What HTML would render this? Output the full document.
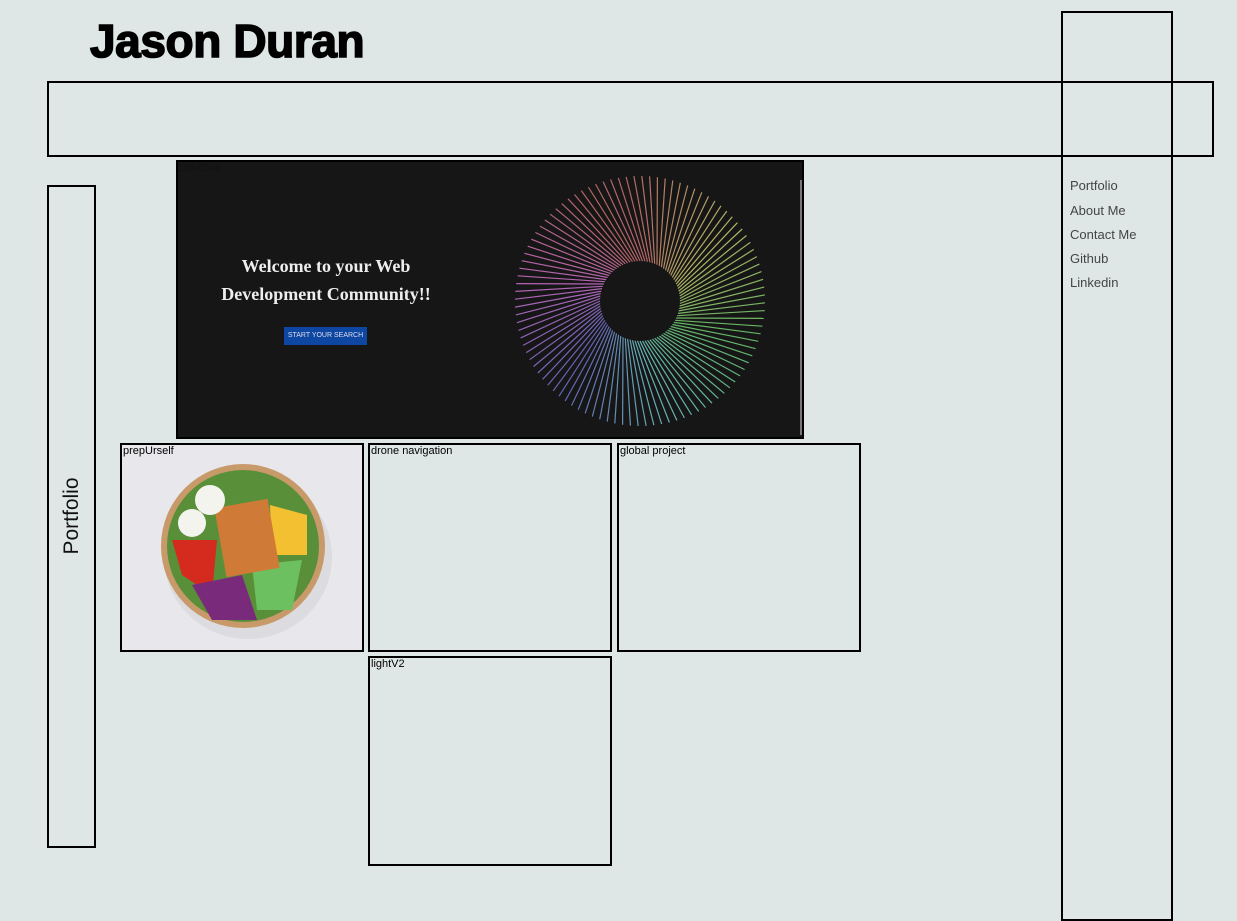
<!DOCTYPE html>
<html><head><meta charset="utf-8"><style>
body{margin:0;width:1237px;height:908px;background:#dfe7e6;position:relative;overflow:hidden;font-family:"Liberation Sans",sans-serif}
.a{position:absolute;box-sizing:border-box}
.b{border:2px solid #000}
h1{position:absolute;left:90px;top:14px;margin:0;font-size:46px;font-weight:bold;letter-spacing:-0.4px;color:#000;-webkit-text-stroke:1.6px #000}
.lbl{font-size:11px;color:#000;position:absolute;left:1px;top:0;line-height:13px}
.nav{position:absolute;left:1070px;font-size:13px;color:#444;}
</style></head><body>
<h1>Jason Duran</h1>
<div class="a b" style="left:47px;top:81px;width:1167px;height:76px"></div>
<div class="a b" style="left:1061px;top:11px;width:112px;height:910px"></div>
<div class="nav" style="top:178px">Portfolio</div>
<div class="nav" style="top:203px">About Me</div>
<div class="nav" style="top:227px">Contact Me</div>
<div class="nav" style="top:251px">Github</div>
<div class="nav" style="top:275px">Linkedin</div>
<div class="a b" style="left:47px;top:185px;width:49px;height:663px"></div>
<div class="a" style="left:72px;top:516px;transform:translate(-50%,-50%) rotate(-90deg);font-size:21px;color:#111;white-space:nowrap">Portfolio</div>

<div class="a b" style="left:176px;top:160px;width:628px;height:279px;background:#161616;overflow:hidden">
<div class="lbl" style="color:#111">DevDive</div>
<div class="a" style="top:18px;width:2px;height:255px;background:#777;left:622px"></div>
<div class="a" style="left:0;top:90px;width:296px;text-align:center;color:#eee;font-family:'Liberation Serif',serif;font-weight:bold;font-size:18px;line-height:28px">Welcome to your Web<br>Development Community!!</div>
<div class="a" style="left:106px;top:165px;width:83px;height:18px;background:#0d47a1;color:#dde;font-size:7px;line-height:18px;text-align:center">START YOUR SEARCH</div>
<svg id="sp" class="a" style="left:0;top:0" width="628" height="279"></svg>
</div>

<div class="a b" style="left:120px;top:443px;width:244px;height:209px;background:#e8e8ec;overflow:hidden">
<svg class="a" style="left:0;top:0" width="244" height="209">
<ellipse cx="126" cy="112" rx="84" ry="82" fill="#d0cfd4" opacity=".5"/>
<circle cx="121" cy="101" r="82" fill="#c89a6a"/>
<circle cx="121" cy="101" r="76" fill="#5a8f3a"/>
<path d="M50 95 L95 95 L90 150 L60 130Z" fill="#d42b1e"/>
<path d="M70 140 L120 130 L135 175 L90 175Z" fill="#7a2a7a"/>
<path d="M148 60 L185 70 L185 110 L150 110Z" fill="#f2c030"/>
<path d="M130 120 L180 115 L170 165 L135 165Z" fill="#6cc060"/>
<rect x="98" y="58" width="54" height="70" fill="#d07a38" transform="rotate(-10 125 93)"/>
<circle cx="88" cy="55" r="15" fill="#f4f4ee"/>
<circle cx="70" cy="78" r="14" fill="#f4f4ee"/>
</svg>
<div class="lbl">prepUrself</div></div>
<div class="a b" style="left:368px;top:443px;width:244px;height:209px"><div class="lbl">drone navigation</div></div>
<div class="a b" style="left:617px;top:443px;width:244px;height:209px"><div class="lbl">global project</div></div>
<div class="a b" style="left:368px;top:656px;width:244px;height:210px"><div class="lbl">lightV2</div></div>
<script>
var s=document.getElementById('sp'),cx=462,cy=139,n=100,h='';
for(var i=0;i<n;i++){var deg=i/n*360;var a=deg*Math.PI/180-Math.PI/2;var tw=0.3;
var x1=cx+Math.cos(a)*40,y1=cy+Math.sin(a)*40,x2=cx+Math.cos(a-tw)*125,y2=cy+Math.sin(a-tw)*125;
var hue=(350+deg*1.05)%360;
var col='hsl('+hue.toFixed(0)+',35%,55%)';
h+='<line x1="'+x1.toFixed(1)+'" y1="'+y1.toFixed(1)+'" x2="'+x2.toFixed(1)+'" y2="'+y2.toFixed(1)+'" stroke="'+col+'" stroke-width="1.2"/>';}
s.innerHTML=h;
</script>
</body></html>
